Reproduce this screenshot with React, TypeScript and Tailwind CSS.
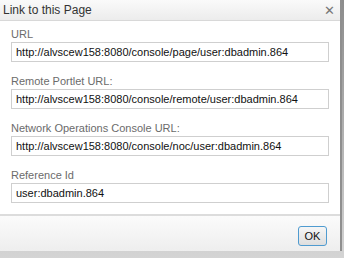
import React from "react";

const fields = [
  { label: "URL", value: "http://alvscew158:8080/console/page/user:dbadmin.864" },
  { label: "Remote Portlet URL:", value: "http://alvscew158:8080/console/remote/user:dbadmin.864" },
  { label: "Network Operations Console URL:", value: "http://alvscew158:8080/console/noc/user:dbadmin.864" },
  { label: "Reference Id", value: "user:dbadmin.864" },
];

export default function App() {
  return (
    <div className="w-[344px] h-[258px] bg-gradient-to-b from-[#8c8c8c] to-[#d4d4d4] font-['Liberation_Sans',Arial,sans-serif] text-[11px]">
      <div className="w-[342px] h-[251px] flex flex-col bg-white border-r-[2px] border-[#8f8f8f]">
        {/* title bar */}
        <div className="h-[21px] shrink-0 flex items-center justify-between pl-[3px] pr-[5px] bg-gradient-to-b from-[#fafafa] to-[#ececec] border-b border-[#d8d8d8]">
          <span className="text-[12px] text-[#333]">Link to this Page</span>
          <span className="text-[13px] text-[#777] leading-none">✕</span>
        </div>
        {/* fields */}
        <div className="flex-1 flex flex-col gap-[12px] pt-[6px] px-[11px]">
          {fields.map((f) => (
            <div key={f.label} className="flex flex-col">
              <span className="text-[#6b6b6b] leading-[14px] mb-[1px]">{f.label}</span>
              <div className="h-[20px] w-[318px] flex items-center px-[4px] border border-[#cfcfcf] bg-white text-[#111]">
                {f.value}
              </div>
            </div>
          ))}
        </div>
        {/* footer */}
        <div className="h-[37px] shrink-0 flex items-start pt-[10px] justify-end pr-[13px] border-t-[2px] border-[#dcdcdc] bg-gradient-to-b from-[#fbfbfb] to-[#eeeeee]">
          <button className="w-[29px] h-[20px] rounded-[3px] border border-[#4f9bd0] bg-gradient-to-b from-[#f6f6f6] to-[#dedede] text-[#111] text-[11px]">
            OK
          </button>
        </div>
      </div>
    </div>
  );
}
